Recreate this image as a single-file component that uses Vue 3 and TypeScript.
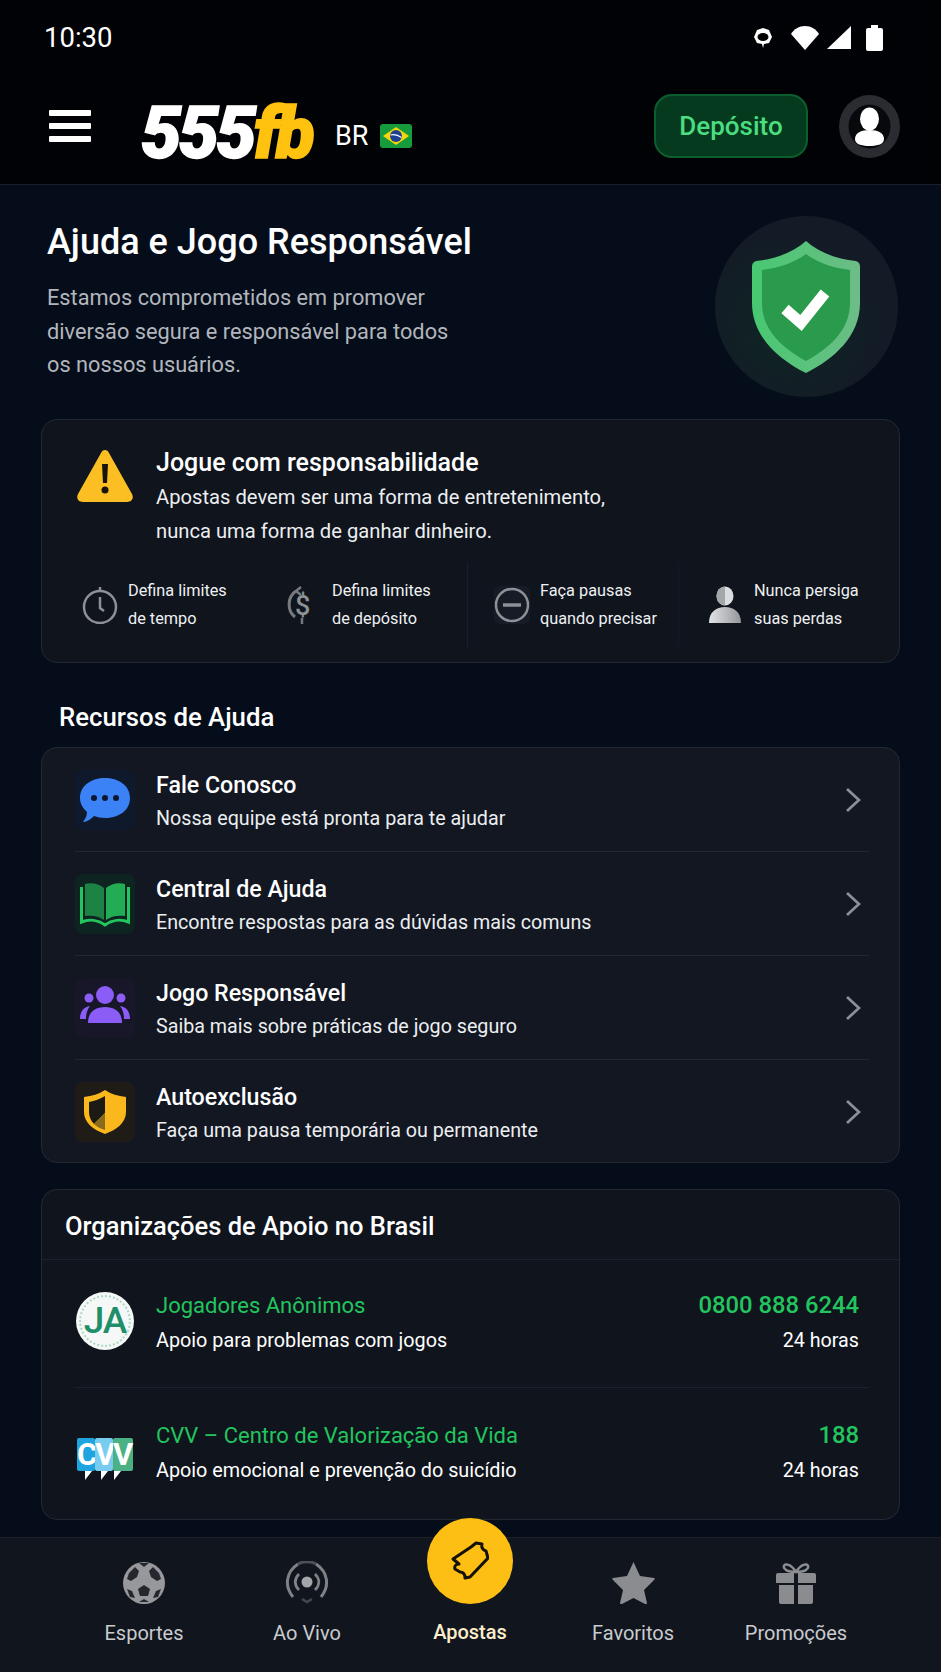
<script setup lang="ts">
const limits = [
  { icon: "clock", a: "Defina limites", b: "de tempo" },
  { icon: "dollar", a: "Defina limites", b: "de depósito" },
  { icon: "minus", a: "Faça pausas", b: "quando precisar" },
  { icon: "person", a: "Nunca persiga", b: "suas perdas" },
];

const resources = [
  { icon: "chat", title: "Fale Conosco", sub: "Nossa equipe está pronta para te ajudar" },
  { icon: "book", title: "Central de Ajuda", sub: "Encontre respostas para as dúvidas mais comuns" },
  { icon: "people", title: "Jogo Responsável", sub: "Saiba mais sobre práticas de jogo seguro" },
  { icon: "guard", title: "Autoexclusão", sub: "Faça uma pausa temporária ou permanente" },
];

const orgs = [
  { logo: "ja", name: "Jogadores Anônimos", sub: "Apoio para problemas com jogos", phone: "0800 888 6244" },
  { logo: "cvv", name: "CVV – Centro de Valorização da Vida", sub: "Apoio emocional e prevenção do suicídio", phone: "188" },
];

const nav = [
  { icon: "ball", label: "Esportes" },
  { icon: "live", label: "Ao Vivo" },
  { icon: "ticket", label: "Apostas" },
  { icon: "star", label: "Favoritos" },
  { icon: "gift", label: "Promoções" },
];
</script>

<template>
  <div class="app">
    <header class="top">
      <div class="status">
        <span class="time">10:30</span>
        <div class="status-icons">
          <svg width="18" height="22" viewBox="0 0 18 22"><path d="M9 1 15 3 18 10 15 16 10 17 9 21 8 17 3 16 0 10 3 3Z" fill="#fff" /><ellipse cx="9" cy="10" rx="5.500" ry="4" fill="#000" /></svg>
          <svg width="28" height="24" viewBox="0 0 28 24"><path d="M14 24 0 8C3 3 8 0 14 0s11 3 14 8Z" fill="#fff" /></svg>
          <svg width="24" height="23" viewBox="0 0 24 23"><path d="M24 0V23H0Z" fill="#fff" /></svg>
          <svg width="17" height="26" viewBox="0 0 17 26"><path d="M5 0H12V3H15Q17 3 17 5V24Q17 26 15 26H2Q0 26 0 24V5Q0 3 2 3H5Z" fill="#fff" /></svg>
        </div>
      </div>
      <div class="bar">
        <div class="burger"><i></i><i></i><i></i></div>
        <div class="logo"><span class="logo-text">555<em>fb</em></span></div>
        <span class="region">BR</span>
        <svg class="flag" width="32" height="24" viewBox="0 0 32 24">
          <rect width="32" height="24" rx="3" fill="#169b3c" />
          <path d="M16 3 29 12 16 21 3 12Z" fill="#f6d50a" />
          <circle cx="16" cy="12" r="6" fill="#1d3f94" />
          <path d="M10.500 11Q16 9.500 21.500 13.500" stroke="#fff" stroke-width="1.200" fill="none" />
        </svg>
        <button class="deposit">Depósito</button>
        <div class="avatar">
          <svg width="61" height="63" viewBox="0 0 61 63">
            <ellipse cx="30.500" cy="31.500" rx="30.500" ry="31.500" fill="#2a2c31" />
            <ellipse cx="30.500" cy="31.500" rx="21" ry="22" fill="#08090d" />
            <ellipse cx="30.500" cy="24" rx="9.500" ry="11.500" fill="#fff" />
            <path d="M16 44C16 38 22 35 30.500 35S45 38 45 44C45 49 39 51 30.500 51S16 49 16 44Z" fill="#fff" />
          </svg>
        </div>
      </div>
    </header>

    <main class="page">
      <section class="hero">
        <div class="hero-text">
          <h1>Ajuda e Jogo Responsável</h1>
          <p>Estamos comprometidos em promover<br />diversão segura e responsável para todos<br />os nossos usuários.</p>
        </div>
        <div class="hero-badge">
          <svg width="108" height="132" viewBox="0 0 108 132">
            <defs>
              <linearGradient id="rim" x1="0" x2="1" y1="0" y2="0">
                <stop offset="0" stop-color="#47c871" />
                <stop offset="1" stop-color="#6cbd87" />
              </linearGradient>
            </defs>
            <path d="M54 0C66 11 84 18 104 20 107 21 108 23 108 26V62C108 95 82 118 54 132 26 118 0 95 0 62V26C0 23 1 21 4 20 24 18 42 11 54 0Z" fill="url(#rim)" />
            <path d="M54 13C66 22 82 27 98 29V62C98 90 76 108 54 120 32 108 10 90 10 62V29C26 27 42 22 54 13Z" fill="#2a9a4c" />
            <path d="M33 68 49 82 73 52" fill="none" stroke="#fff" stroke-width="11" />
          </svg>
        </div>
      </section>

      <section class="card warn">
        <div class="warn-top">
          <svg class="warn-icon" width="56" height="52" viewBox="0 0 56 52">
            <path d="M28 0C30 0 31 1 32 3L55 44C57 48 55 52 50 52H6C1 52 -1 48 1 44L24 3C25 1 26 0 28 0Z" fill="#fbbf24" />
            <path d="M25 14H31L30 33H26Z" fill="#17140a" />
            <circle cx="28" cy="40" r="3.500" fill="#17140a" />
          </svg>
          <div>
            <h2>Jogue com responsabilidade</h2>
            <p>Apostas devem ser uma forma de entretenimento,<br />nunca uma forma de ganhar dinheiro.</p>
          </div>
        </div>
        <div class="limits">
          <div v-for="l in limits" :key="l.b" class="limit" :class="'limit-' + l.icon">
            <svg class="limit-icon" width="36" height="38" viewBox="0 0 36 38" fill="none">
              <defs v-if="l.icon === 'person'">
                <linearGradient id="bust" x1="0" x2="1" y1="0" y2="0">
                  <stop offset="0" stop-color="#e2e3e5" />
                  <stop offset="1" stop-color="#94979b" />
                </linearGradient>
              </defs>
              <template v-if="l.icon === 'clock'">
                <circle cx="18" cy="21" r="16" stroke="#8d9094" stroke-width="2.500" />
                <path d="M18 1V5M18 11V22L22 25" stroke="#8d9094" stroke-width="2.500" />
              </template>
              <template v-else-if="l.icon === 'dollar'">
                <path d="M10 5C1 11 1 25 9 31" stroke="#77797d" stroke-width="3" />
                <path d="M15 1 10 5 15 9" stroke="#77797d" stroke-width="2.500" />
                <text x="9" y="29" class="dollar">$</text>
                <path d="M16 32V38" stroke="#77797d" stroke-width="2.500" />
              </template>
              <template v-else-if="l.icon === 'minus'">
                <circle cx="18" cy="19" r="16" stroke="#8d9094" stroke-width="2.500" />
                <path d="M9 19H27" stroke="#8d9094" stroke-width="3.500" />
              </template>
              <template v-else>
                <ellipse cx="17" cy="10" rx="8.500" ry="9.500" fill="#dcdde0" />
                <path d="M17 .500A8.500 9.500 0 0 0 17 19.500Z" fill="#a5a8ab" />
                <path d="M1 37C1 26 8 21 17 21S33 26 33 37Z" fill="url(#bust)" />
              </template>
            </svg>
            <span>{{ l.a }}<br />{{ l.b }}</span>
          </div>
        </div>
      </section>

      <h3 class="section-title">Recursos de Ajuda</h3>

      <section class="card list">
        <div v-for="r in resources" :key="r.title" class="row">
          <div class="tile" :class="'tile-' + r.icon">
            <svg width="50" height="50" viewBox="0 0 50 50">
              <template v-if="r.icon === 'chat'">
                <path d="M25 3C38 3 50 10 50 23S38 43 25 43C21 43 17 42 14 41 10 45 6 47 3 47 5 44 7 41 7 37 3 33 0 29 0 23 0 10 12 3 25 3Z" fill="#3b82f6" />
                <circle cx="14" cy="23" r="3" fill="#0b1730" />
                <circle cx="25" cy="23" r="3" fill="#0b1730" />
                <circle cx="36" cy="23" r="3" fill="#0b1730" />
              </template>
              <template v-else-if="r.icon === 'book'">
                <path d="M5 5C12 3 19 5 24 9V41C19 37 12 36 5 37Z" fill="#1c8344" />
                <path d="M45 5C38 3 31 5 26 9V41C31 37 38 36 45 37Z" fill="#22ad54" />
                <path d="M1.500 8V43C9 40 18 41 25 46 32 41 41 40 48.500 43V8" fill="none" stroke="#22c55e" stroke-width="3" />
              </template>
              <template v-else-if="r.icon === 'people'">
                <circle cx="25" cy="12" r="9" fill="#8b5cf6" />
                <circle cx="9" cy="15" r="4.500" fill="#8b5cf6" />
                <circle cx="41" cy="15" r="4.500" fill="#8b5cf6" />
                <path d="M8 40C8 29 15 24 25 24S42 29 42 40Z" fill="#8b5cf6" />
                <path d="M0 36C0 28 4 24 10 23 7 27 6 31 6 36ZM50 36C50 28 46 24 40 23 43 27 44 31 44 36Z" fill="#8b5cf6" />
              </template>
              <template v-else>
                <path d="M25 3C31 7 38 9 46 10V25C46 36 36 43 25 47 14 43 4 36 4 25V10C12 9 19 7 25 3Z" fill="#fbb81c" />
                <path d="M25 9C20 12 15 14 9 15V25C9 30 11 34 14 37L25 26Z" fill="#1c1a14" />
                <path d="M25 26 14 37C17 40 21 42 25 43Z" fill="#8a6a1c" />
              </template>
            </svg>
          </div>
          <div class="row-text">
            <strong>{{ r.title }}</strong>
            <span>{{ r.sub }}</span>
          </div>
          <svg class="chevron" width="16" height="26" viewBox="0 0 16 26"><path d="M2 2 14 13 2 24" fill="none" stroke="#8a8e95" stroke-width="2.800" /></svg>
        </div>
      </section>

      <section class="card orgs">
        <h3>Organizações de Apoio no Brasil</h3>
        <div v-for="o in orgs" :key="o.name" class="org">
          <div class="org-logo">
            <div v-if="o.logo === 'ja'" class="ja">JA</div>
            <div v-else class="cvv"><b class="c1">C</b><b class="c2">V</b><b class="c3">V</b></div>
          </div>
          <div class="org-text">
            <strong>{{ o.name }}</strong>
            <span>{{ o.sub }}</span>
          </div>
          <div class="org-right">
            <strong>{{ o.phone }}</strong>
            <span>24 horas</span>
          </div>
        </div>
      </section>
    </main>

    <nav class="nav">
      <div v-for="n in nav" :key="n.label" class="nav-item" :class="{ active: n.icon === 'ticket' }">
        <div class="nav-icon">
          <svg v-if="n.icon === 'ball'" width="42" height="42" viewBox="0 0 42 42">
            <circle cx="21" cy="21" r="21" fill="#96989b" />
            <path d="M16 1H26L21 5ZM6 11 12 5 16 9 14 15 8 19 4 17ZM36 11 30 5 26 9 28 15 34 19 38 17ZM15 27 21 23 27 27 25 34H17ZM4 27 9 29 12 36 7 35ZM38 27 33 29 30 36 35 35ZM16 40H26L21 37Z" fill="#24272d" />
          </svg>
          <svg v-else-if="n.icon === 'live'" width="44" height="44" viewBox="0 0 44 44" fill="none" stroke="#7f8285">
            <circle cx="22" cy="21" r="5.500" fill="#a4a6a9" stroke="none" />
            <path d="M14 29C9 24 9 18 14 13M30 13C35 18 35 24 30 29" stroke-width="2.800" />
            <path d="M8 36C-1 25 1 11 13 3M31 3C43 11 45 25 36 36" stroke-width="3" />
            <path d="M13 3C18 0 26 0 31 3" stroke="#4c4f54" stroke-width="3" />
            <path d="M17 38 22 41 27 38" stroke="#45484d" stroke-width="2.500" />
          </svg>
          <svg v-else-if="n.icon === 'ticket'" width="38" height="40" viewBox="0 0 38 40" fill="none" stroke="#14110a" stroke-width="3" stroke-linejoin="round">
            <path d="M20 6 25 2 31 3C30 7 32 9 35 10L37 17 19 36 14 37C14 33 12 31 9 31L4 28C3 25 5 23 8 23L2 18Z" />
          </svg>
          <svg v-else-if="n.icon === 'star'" width="43" height="42" viewBox="0 0 43 42">
            <path d="M21.500 0 28 14 42 16C43 16 43 17 42 18L32 28 35 41C35 42 34 42 33 42L21.500 36 10 42C9 42 8 42 8 41L11 28 1 18C0 17 0 16 1 16L15 14Z" fill="#8a8c90" />
          </svg>
          <svg v-else width="40" height="41" viewBox="0 0 40 41">
            <path d="M20 9C15 1 9 0 8 3 7 6 11 9 20 9ZM20 9C25 1 31 0 32 3 33 6 29 9 20 9Z" fill="none" stroke="#8a8c90" stroke-width="2.500" />
            <path d="M2 10H18V20H0V12Q0 10 2 10ZM22 10H38Q40 10 40 12V20H22ZM3 22H18V41H5Q3 41 3 39ZM22 22H37V39Q37 41 35 41H22Z" fill="#8a8c90" />
          </svg>
        </div>
        <span>{{ n.label }}</span>
      </div>
    </nav>
  </div>
</template>

<style>
body {
  background: #060d1a;
}
</style>

<style scoped>
.app {
  width: 941px;
  height: 1672px;
  display: flex;
  flex-direction: column;
  overflow: hidden;
  font-family: Roboto, "Noto Sans", sans-serif;
  color: #fff;
  background: #060d1a;
}
.top {
  height: 185px;
  flex: none;
  background: #010205;
  border-bottom: 1px solid #1a1f28;
  box-sizing: border-box;
}
.status {
  height: 75px;
  padding: 0 58px 0 44px;
  display: flex;
  align-items: center;
  justify-content: space-between;
}
.time {
  font-size: 27.500px;
}
.status-icons {
  display: flex;
  align-items: center;
  gap: 8px;
}
.status-icons svg:first-child {
  margin-right: 11px;
}
.status-icons svg:last-child {
  margin-left: 7px;
}
.bar {
  display: flex;
  align-items: center;
  height: 102px;
  padding: 0 41px 0 49px;
}
.burger {
  width: 42px;
  display: flex;
  flex-direction: column;
  gap: 7.500px;
}
.burger i {
  height: 5.500px;
  background: #fff;
  border-radius: 1px;
}
.logo {
  width: 194px;
  margin-left: 50px;
  height: 60px;
  margin-top: 16px;
  line-height: 60px;
}
.logo-text {
  display: inline-block;
  font-size: 72px;
  font-weight: 900;
  font-style: italic;
  letter-spacing: -3px;
  -webkit-text-stroke: 1.500px currentColor;
  white-space: nowrap;
}
.logo-text em {
  color: #fec20f;
}
.region {
  font-size: 27px;
  margin-top: 20px;
}
.flag {
  margin: 20px 0 0 12px;
}
.deposit {
  margin-left: auto;
  width: 154px;
  height: 64px;
  border-radius: 18px;
  border: 2px solid #0d5e2f;
  background: #063a1e;
  color: #4ade80;
  font: 500 26px Roboto, sans-serif;
}
.avatar {
  margin-left: 31px;
  height: 63px;
}
.page {
  flex: 1;
  min-height: 0;
  padding: 0 41px;
}
.hero {
  position: relative;
  height: 234px;
  padding: 37px 0 0 6px;
  box-sizing: border-box;
  display: flex;
  justify-content: space-between;
}
.hero h1 {
  margin: 0;
  font-size: 36px;
  font-weight: 500;
  line-height: 40px;
}
.hero p {
  margin: 19px 0 0;
  font-size: 21.750px;
  line-height: 33.500px;
  color: #b2b6bc;
}
.hero-badge {
  position: absolute;
  right: 2px;
  top: 31px;
  width: 183px;
  height: 181px;
  border-radius: 50%;
  background: radial-gradient(circle at 40% 60%, #0e2624 0, #141a26 65%);
  display: flex;
  align-items: center;
  justify-content: center;
}
.hero-badge svg {
  margin-right: 2px;
}
.card {
  background: #0f141d;
  border: 1px solid #232933;
  border-radius: 16px;
  box-sizing: border-box;
}
.warn {
  height: 244px;
  padding: 28px 0 0 35px;
}
.warn-top {
  display: flex;
  gap: 23px;
}
.warn-icon {
  margin-top: 2px;
  flex: none;
}
.warn h2 {
  margin: 0;
  font-size: 25px;
  font-weight: 500;
  line-height: 30px;
}
.warn p {
  margin: 3px 0 0;
  font-size: 20.200px;
  line-height: 33.500px;
  color: #eceef0;
}
.limits {
  display: grid;
  grid-template-columns: 204px 208px 214px auto;
  margin: 29px 0 0 5px;
}
.limit {
  position: relative;
  display: flex;
  align-items: center;
  gap: 10px;
  font-size: 16.300px;
  line-height: 28px;
  color: #eef0f2;
}
.limit-minus::before,
.limit-person::before {
  content: "";
  position: absolute;
  top: -14px;
  bottom: -14px;
  width: 1px;
  background: #1a202a;
}
.limit-minus::before {
  left: -27px;
}
.limit-person::before {
  left: -30px;
  background: #141a24;
}
.limit-minus .limit-icon {
  background: #161c25;
  border-radius: 6px;
}
.dollar {
  font: 500 27px Roboto, sans-serif;
  fill: #8d9094;
}
.section-title {
  margin: 0;
  padding: 36px 0 0 18px;
  height: 84px;
  box-sizing: border-box;
  font-size: 25.750px;
  font-weight: 500;
  line-height: 36px;
}
.list {
  background: #121722;
  height: 416px;
  padding: 0 30px 0 33px;
}
.row {
  height: 104px;
  display: flex;
  align-items: center;
  border-bottom: 1px solid #232933;
  box-sizing: border-box;
}
.row:last-child {
  border-bottom: none;
}
.tile {
  width: 60px;
  height: 60px;
  border-radius: 8px;
  display: flex;
  align-items: center;
  justify-content: center;
  flex: none;
}
.tile-chat {
  background: #0e1a2c;
}
.tile-book {
  background: #0e2420;
}
.tile-people {
  background: #171729;
}
.tile-guard {
  background: #1f1c18;
}
.row-text {
  margin-left: 21px;
  padding-top: 2px;
  flex: 1;
  display: flex;
  flex-direction: column;
}
.row-text strong {
  font-size: 23.200px;
  font-weight: 500;
  line-height: 33px;
}
.row-text span {
  margin-top: 2px;
  font-size: 19.700px;
  line-height: 29px;
  color: #eceef0;
}
.chevron {
  margin-right: 8px;
}
.orgs {
  margin-top: 26px;
  height: 331px;
}
.orgs h3 {
  margin: 0;
  height: 70px;
  padding-left: 23px;
  font-size: 25.500px;
  font-weight: 500;
  line-height: 73px;
  border-bottom: 1px solid #1c222c;
  box-sizing: border-box;
}
.org {
  margin: 0 30px 0 33px;
  height: 128px;
  display: flex;
  align-items: center;
  border-bottom: 1px solid #1c222c;
  box-sizing: border-box;
}
.org:last-child {
  border-bottom: none;
  height: 131px;
}
.org-logo {
  width: 60px;
  flex: none;
  display: flex;
  justify-content: center;
  margin-top: -6px;
}
.ja {
  position: relative;
  width: 58px;
  height: 58px;
  border-radius: 50%;
  background: #f6f8f7;
  color: #1f8f6a;
  font-size: 37px;
  font-weight: 500;
  letter-spacing: -1px;
  line-height: 57px;
  text-align: center;
}
.ja::after {
  content: "";
  position: absolute;
  inset: 3px;
  border-radius: 50%;
  border: 2px dotted #a9d8c4;
}
.cvv {
  display: flex;
  height: 33px;
  margin-top: 8px;
}
.cvv b {
  position: relative;
  height: 33px;
  text-align: center;
  font-size: 31px;
  font-weight: 700;
  line-height: 33px;
  border-radius: 2px;
}
.cvv b::after {
  content: "";
  position: absolute;
  top: 33px;
  border-top: 9px solid;
  border-right: 7px solid transparent;
}
.c1 {
  width: 18px;
  background: #1fa4df;
  color: #fff;
}
.c1::after {
  left: 8px;
  border-top-color: #1fa4df;
}
.c2 {
  width: 18px;
  background: #78ccf0;
}
.c2::after {
  left: 6px;
  border-top-width: 5px;
  border-right-width: 4px;
  border-top-color: #78ccf0;
}
.c3 {
  width: 20px;
  background: #4bb184;
}
.c3::after {
  left: 1px;
  border-top-color: #4bb184;
}
.org-text {
  margin-left: 21px;
  flex: 1;
  display: flex;
  flex-direction: column;
  gap: 8px;
}
.org-text strong {
  color: #22c55e;
  font-size: 22px;
  font-weight: 400;
  line-height: 27px;
}
.org-text span {
  font-size: 19.800px;
  line-height: 28px;
}
.org-right span {
  font-size: 19.700px;
  line-height: 28px;
}
.org-right {
  display: flex;
  flex-direction: column;
  align-items: flex-end;
  gap: 8px;
  margin-right: 10px;
}
.org-right strong {
  color: #22c55e;
  font-size: 23.800px;
  font-weight: 500;
  line-height: 27px;
}
.nav {
  flex: none;
  height: 135px;
  display: grid;
  grid-template-columns: repeat(5, 163px);
  justify-content: center;
  padding-right: 1px;
  background: #10151e;
  border-top: 1px solid #1b2029;
  box-sizing: border-box;
}
.nav-item {
  display: flex;
  flex-direction: column;
  align-items: center;
  font-size: 20px;
  color: #c9cbce;
}
.nav-icon {
  height: 44px;
  margin: 23px 0 16px;
  display: flex;
  align-items: center;
  justify-content: center;
}
.active {
  color: #fdeecb;
  font-weight: 500;
}
.active .nav-icon {
  width: 86px;
  height: 86px;
  margin: -20px 0 16px;
  border-radius: 50%;
  background: #fdbf14;
}
</style>
